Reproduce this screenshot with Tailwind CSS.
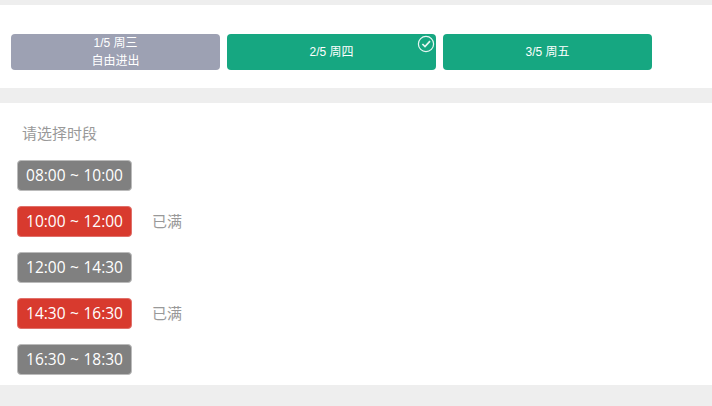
<!DOCTYPE html>
<html lang="zh">

<head>
    <meta charset="UTF-8">
    <title>选择时段</title>
    <script src="https://cdn.jsdelivr.net/npm/@tailwindcss/browser@4"></script>
</head>

<body class="bg-[#eeeeee] font-['Open_Sans','Noto_Sans_CJK_SC',sans-serif]">
    <div class="h-[406px] w-[712px] overflow-hidden pt-[5px]">

        <!-- dates -->
        <div class="flex h-[83px] gap-[7px] bg-white pl-[11px] pt-[29px] font-['Liberation_Sans','Noto_Sans_CJK_SC',sans-serif]">
            <div class="flex h-9 w-[209px] flex-col items-center justify-center rounded-[4px] bg-[#9da1b3] text-[12px] leading-[18px] text-white">
                <span>1/5 周三</span>
                <span>自由进出</span>
            </div>
            <div class="relative flex h-9 w-[209px] items-center justify-center rounded-[4px] bg-[#16a781] text-[12px] text-white">
                <span>2/5 周四</span>
                <svg class="absolute right-[1px] top-[1px] h-[18px] w-[18px]" viewBox="0 0 18 18" fill="none" stroke="white">
                    <circle cx="9" cy="9" r="7.6" stroke-width="1.2" stroke-opacity="0.9" />
                    <path d="M5.4 9l2.6 2.6 5-5.4" stroke-width="1.7" stroke-opacity="0.9" />
                </svg>
            </div>
            <div class="flex h-9 w-[209px] items-center justify-center rounded-[4px] bg-[#16a781] text-[12px] text-white">
                <span>3/5 周五</span>
            </div>
        </div>

        <!-- time slots -->
        <div class="mt-[15px] h-[282px] bg-white pl-[17px] pt-5">
            <p class="pl-[5px] text-[15px] leading-5 text-[#999999]">请选择时段</p>
            <div class="mt-[17px] flex flex-col gap-[15px]">
                <div class="flex items-center">
                    <div class="flex h-[31px] w-[115px] items-center justify-center rounded-[4px] border border-[#bbbbbb] bg-[#808080] text-[15.5px] [word-spacing:0.5px] text-white">08:00 ~ 10:00</div>
                </div>
                <div class="flex items-center">
                    <div class="flex h-[31px] w-[115px] items-center justify-center rounded-[4px] border border-[#e0706a] bg-[#d83a2e] text-[15.5px] [word-spacing:0.5px] text-white">10:00 ~ 12:00</div>
                    <span class="ml-5 text-[15px] text-[#999999]">已满</span>
                </div>
                <div class="flex items-center">
                    <div class="flex h-[31px] w-[115px] items-center justify-center rounded-[4px] border border-[#bbbbbb] bg-[#808080] text-[15.5px] [word-spacing:0.5px] text-white">12:00 ~ 14:30</div>
                </div>
                <div class="flex items-center">
                    <div class="flex h-[31px] w-[115px] items-center justify-center rounded-[4px] border border-[#e0706a] bg-[#d83a2e] text-[15.5px] [word-spacing:0.5px] text-white">14:30 ~ 16:30</div>
                    <span class="ml-5 text-[15px] text-[#999999]">已满</span>
                </div>
                <div class="flex items-center">
                    <div class="flex h-[31px] w-[115px] items-center justify-center rounded-[4px] border border-[#bbbbbb] bg-[#808080] text-[15.5px] [word-spacing:0.5px] text-white">16:30 ~ 18:30</div>
                </div>
            </div>
        </div>
    </div>
</body>

</html>
